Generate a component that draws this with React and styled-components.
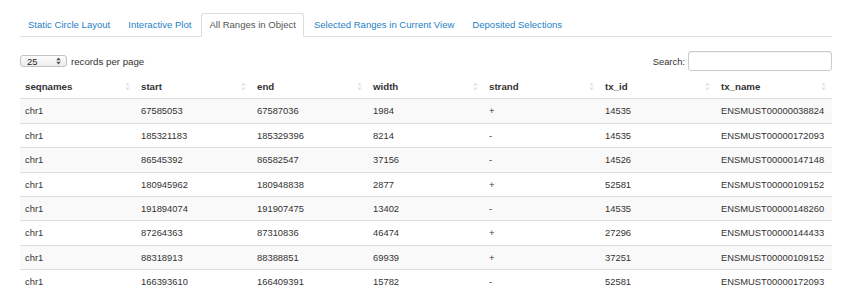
import React from 'react';
import styled, { createGlobalStyle } from 'styled-components';

const GlobalStyle = createGlobalStyle`
  body {
    margin: 0;
    background: #fff;
    font-family: "Liberation Sans", Arial, sans-serif;
    color: #333;
  }
`;

const tabs = [
  'Static Circle Layout',
  'Interactive Plot',
  'All Ranges in Object',
  'Selected Ranges in Current View',
  'Deposited Selections',
];

const columns = ['seqnames', 'start', 'end', 'width', 'strand', 'tx_id', 'tx_name'];

const rows = [
  ['chr1', '67585053', '67587036', '1984', '+', '14535', 'ENSMUST00000038824'],
  ['chr1', '185321183', '185329396', '8214', '-', '14535', 'ENSMUST00000172093'],
  ['chr1', '86545392', '86582547', '37156', '-', '14526', 'ENSMUST00000147148'],
  ['chr1', '180945962', '180948838', '2877', '+', '52581', 'ENSMUST00000109152'],
  ['chr1', '191894074', '191907475', '13402', '-', '14535', 'ENSMUST00000148260'],
  ['chr1', '87264363', '87310836', '46474', '+', '27296', 'ENSMUST00000144433'],
  ['chr1', '88318913', '88388851', '69939', '+', '37251', 'ENSMUST00000109152'],
  ['chr1', '166393610', '166409391', '15782', '-', '52581', 'ENSMUST00000172093'],
];

export default class App extends React.Component {
  render() {
    return (
      <Page>
        <GlobalStyle />
        <TabBar>
          {tabs.map((t) => (
            <Tab key={t} $active={t === 'All Ranges in Object'}>
              {t}
            </Tab>
          ))}
        </TabBar>

        <Controls>
          <Length>
            <FakeSelect>
              <span>25</span>
              <svg width="5" height="8" viewBox="0 0 5 8">
                <path d="M2.5 0.5 L4.8 3.2 H0.2 Z" fill="#555" />
                <path d="M2.5 7.5 L4.8 4.8 H0.2 Z" fill="#555" />
              </svg>
            </FakeSelect>
            records per page
          </Length>
          <Filter>
            Search:
            <SearchBox />
          </Filter>
        </Controls>

        <Table>
          <thead>
            <tr>
              {columns.map((c) => (
                <Th key={c}>
                  <HeadInner>
                    {c}
                    <SortIcon />
                  </HeadInner>
                </Th>
              ))}
            </tr>
          </thead>
          <tbody>
            {rows.map((r, i) => (
              <Row key={i} $striped={i % 2 === 0}>
                {r.map((v, j) => (
                  <Td key={j}>{v}</Td>
                ))}
              </Row>
            ))}
          </tbody>
        </Table>
      </Page>
    );
  }
}

const SortIcon = () => (
  <svg width="5" height="9" viewBox="0 0 5 9">
    <path d="M2.5 0.5 L4.8 3.6 H0.2 Z" fill="#e3e3e3" />
    <path d="M2.5 8.5 L4.8 5.4 H0.2 Z" fill="#e3e3e3" />
  </svg>
);

const Page = styled.div`
  padding: 13px 18px 0 20px;
  font-size: 9.4px;
`;

const TabBar = styled.ul`
  display: flex;
  margin: 0;
  padding: 0;
  list-style: none;
  border-bottom: 1px solid #ddd;
`;

const Tab = styled.li`
  margin: 0 2px -1px 0;
  padding: 0 7px;
  line-height: 22px;
  font-size: 9.55px;
  border: 1px solid ${(p) => (p.$active ? '#ddd' : 'transparent')};
  border-bottom-color: ${(p) => (p.$active ? '#fff' : 'transparent')};
  border-radius: 3px 3px 0 0;
  background: ${(p) => (p.$active ? '#fff' : 'transparent')};
  color: ${(p) => (p.$active ? '#555' : '#1f7fc6')};
  cursor: pointer;
`;

const Controls = styled.div`
  display: flex;
  justify-content: space-between;
  align-items: center;
  margin-top: 14px;
  height: 20px;
`;

const Length = styled.label`
  display: flex;
  align-items: center;
  gap: 4px;
  font-size: 9.7px;
  color: #333;
`;

const FakeSelect = styled.div`
  display: flex;
  align-items: center;
  justify-content: space-between;
  box-sizing: border-box;
  width: 47px;
  height: 12px;
  padding: 0 5px 0 6px;
  border: 1px solid #c2c2c2;
  border-radius: 3px;
  background: linear-gradient(#fdfdfd, #ececec);
  font-size: 9.4px;
  color: #222;
`;

const Filter = styled.label`
  display: flex;
  align-items: center;
  gap: 3px;
`;

const SearchBox = styled.input`
  box-sizing: border-box;
  width: 144px;
  height: 20px;
  margin: 0;
  border: 1px solid #ccc;
  border-radius: 3px;
  box-shadow: inset 0 1px 1px rgba(0, 0, 0, 0.06);
`;

const Table = styled.table`
  width: 100%;
  margin-top: 4px;
  border-collapse: collapse;
  table-layout: fixed;
`;

const Th = styled.th`
  padding: 5px 6px 5px 5px;
  line-height: 13.4px;
  text-align: left;
  font-size: 9.7px;
  font-weight: bold;
  color: #333;
  border-bottom: 1px solid #ddd;
`;

const HeadInner = styled.div`
  display: flex;
  justify-content: space-between;
  align-items: center;
`;

const Row = styled.tr`
  background: ${(p) => (p.$striped ? '#f9f9f9' : '#fff')};
`;

const Td = styled.td`
  padding: 5px 5px;
  line-height: 13.4px;
  color: #333;
  border-top: 1px solid #ddd;
  white-space: nowrap;
`;
